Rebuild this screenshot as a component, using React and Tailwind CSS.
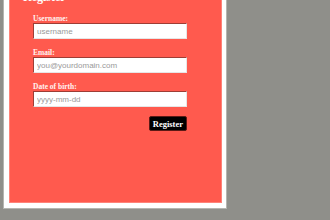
import React from "react";

const serif = { fontFamily: '"Liberation Serif", "DejaVu Serif", serif' };
const sans = { fontFamily: '"Liberation Sans", Arial, sans-serif' };

function Field({ label, placeholder, first }) {
  return (
    <div className={first ? "" : "mt-[9px]"}>
      <div className="text-[7.5px] leading-[9px] font-bold text-[#fff3f1]" style={serif}>
        {label}
      </div>
      <input
        type="text"
        placeholder={placeholder}
        className="block w-[154px] h-[16px] bg-white border border-t-[#9e3d35] border-l-[#9e3d35] border-r-[#e6e6e6] border-b-[#e6e6e6] px-[3px] text-[8px] text-[#333] placeholder:text-[#9a9a9a] outline-none"
        style={sans}
      />
    </div>
  );
}

export default function App() {
  return (
    <div className="w-[330px] h-[220px] bg-[#8f8f8a] overflow-hidden">
      <div className="mt-[-21px] ml-[3px] w-[224px] bg-white border border-[#b5b5b0] pl-[5px] pr-[4px] pt-[5px] pb-[5px]">
        <div className="h-[218px] bg-[#ff5a4e] border border-[#ff8379] pl-[13px] pt-[4px]">
          <div className="text-[12px] leading-[14px] font-bold text-white" style={serif}>
            Register
          </div>
          <form className="ml-[10px] mt-[10px] w-[154px] flex flex-col" onSubmit={(e) => e.preventDefault()}>
            <Field first label="Username:" placeholder="username" />
            <Field label="Email:" placeholder="you@yourdomain.com" />
            <Field label="Date of birth:" placeholder="yyyy-mm-dd" />
            <div className="mt-[9px] flex justify-end">
              <button
                type="submit"
                className="h-[15px] px-[3px] bg-black text-white text-[8.5px] leading-[15px] font-bold rounded-[2px] border border-[#5a1a15]"
                style={serif}
              >
                Register
              </button>
            </div>
          </form>
        </div>
      </div>
    </div>
  );
}
